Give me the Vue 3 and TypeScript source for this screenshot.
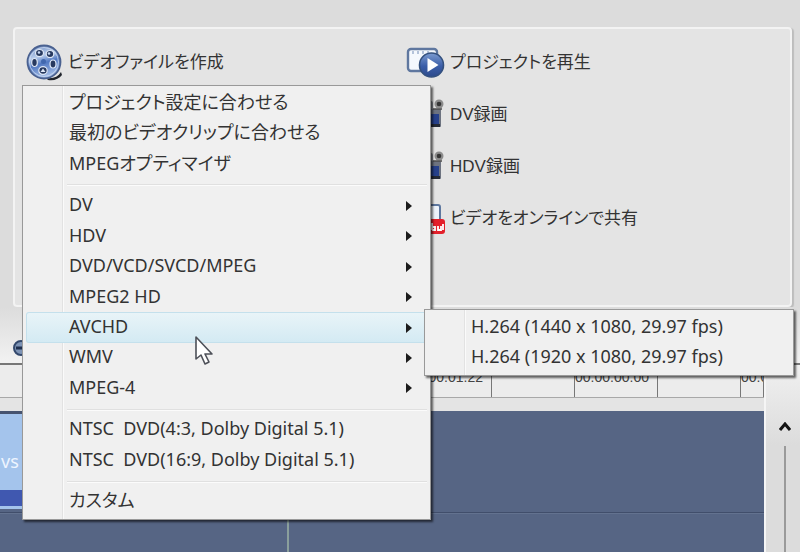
<script setup lang="ts">
interface MenuEntry {
  label: string
  submenu?: boolean
  active?: boolean
}

const groups: MenuEntry[][] = [
  [
    { label: 'プロジェクト設定に合わせる' },
    { label: '最初のビデオクリップに合わせる' },
    { label: 'MPEGオプティマイザ' },
  ],
  [
    { label: 'DV', submenu: true },
    { label: 'HDV', submenu: true },
    { label: 'DVD/VCD/SVCD/MPEG', submenu: true },
    { label: 'MPEG2 HD', submenu: true },
    { label: 'AVCHD', submenu: true, active: true },
    { label: 'WMV', submenu: true },
    { label: 'MPEG-4', submenu: true },
  ],
  [
    { label: 'NTSC  DVD(4:3, Dolby Digital 5.1)' },
    { label: 'NTSC  DVD(16:9, Dolby Digital 5.1)' },
  ],
  [{ label: 'カスタム' }],
]

const formats: string[] = [
  'H.264 (1440 x 1080, 29.97 fps)',
  'H.264 (1920 x 1080, 29.97 fps)',
]

const ticks: string[] = ['', '', '', '', '', '00:00:01:22', '', '00:00:00:00', '', '00:0']
</script>

<template>
  <main class="editor">
    <section class="share">
      <div class="panel">
        <div class="column">
          <button class="action" type="button">
            <svg class="reel" viewBox="0 0 38 38" aria-hidden="true">
              <defs>
                <linearGradient id="reelFill" x1="0" y1="0" x2="0.3" y2="1">
                  <stop offset="0" stop-color="#5d7db8" />
                  <stop offset="0.4" stop-color="#b9cdec" />
                  <stop offset="0.62" stop-color="#5279c2" />
                  <stop offset="1" stop-color="#9fb9e4" />
                </linearGradient>
              </defs>
              <path d="M21 35c7 1 12-1 15-6l1 3c-3 4-8 6-14 5z" fill="#20242c" />
              <circle cx="19" cy="19" r="16.500" fill="url(#reelFill)" stroke="#4a6190" stroke-width="1.800" />
              <circle cx="19" cy="19" r="14.500" fill="none" stroke="#d3e0f4" stroke-width="1" opacity="0.700" />
              <g fill="#27395f" stroke="#dfe8f6" stroke-width="1.200">
                <ellipse cx="14.500" cy="10" rx="4" ry="3.500" />
                <ellipse cx="25" cy="11" rx="3.800" ry="3.500" />
                <ellipse cx="9.500" cy="19.500" rx="2.800" ry="4" />
                <ellipse cx="28" cy="21" rx="3" ry="4" />
                <ellipse cx="18" cy="27.500" rx="4.200" ry="3.800" />
              </g>
              <circle cx="18.500" cy="18.500" r="2.500" fill="#4268ae" />
              <path d="M15.500 29l2.500-3.500 2.500 3.500z" fill="#dfe8f6" />
              <circle cx="14" cy="9.500" r="1.300" fill="#c6d6f0" />
              <circle cx="24" cy="10.500" r="1.300" fill="#c6d6f0" />
            </svg>
            <span>ビデオファイルを作成</span>
          </button>
        </div>
        <div class="column">
          <button class="action" type="button">
            <svg class="icon" viewBox="0 0 40 34" aria-hidden="true">
              <defs>
                <linearGradient id="playFill" x1="0" y1="0" x2="0" y2="1">
                  <stop offset="0" stop-color="#7b9bd0" />
                  <stop offset="0.550" stop-color="#3b5ea8" />
                  <stop offset="1" stop-color="#2c4a8c" />
                </linearGradient>
              </defs>
              <rect x="3" y="4" width="29" height="22" rx="3" fill="#f4f8fd" stroke="#5f779f" stroke-width="2.400" />
              <path d="M8 6v3M13 6v3M18 6v3M23 6v3" stroke="#9fb1ce" stroke-width="1.500" />
              <circle cx="26.500" cy="20" r="12" fill="url(#playFill)" stroke="#34517f" stroke-width="1.600" />
              <path d="M22.500 13v14l11-7z" fill="#fff" />
            </svg>
            <span>プロジェクトを再生</span>
          </button>
          <button v-for="name in ['DV録画', 'HDV録画']" :key="name" class="action" type="button">
            <svg class="icon" viewBox="0 0 40 34" aria-hidden="true">
              <rect x="8" y="4" width="20" height="26" rx="2" fill="#8b8f96" />
              <rect x="24" y="12" width="12" height="18" rx="1" fill="#6d7380" />
              <rect x="24" y="17" width="10" height="10" fill="#26408a" />
              <rect x="24" y="27" width="11" height="3" fill="#252a36" />
              <circle cx="34" cy="7" r="4.500" fill="#8c8c8c" />
              <circle cx="34" cy="7" r="2.300" fill="#353535" />
              <path d="M25 0v11M28 12h9" stroke="#4c4c4c" stroke-width="1.500" />
            </svg>
            <span>{{ name }}</span>
          </button>
          <button class="action" type="button">
            <svg class="icon" viewBox="0 0 40 34" aria-hidden="true">
              <rect x="10" y="4" width="25" height="24" rx="2" fill="#edf3fb" stroke="#5d779f" stroke-width="2" />
              <rect x="12" y="18" width="28" height="15" rx="3" fill="#e3202b" />
              <path d="M27 22v7M27 26h3v3h-3M33 25v4h3v-4M38 23v6" fill="none" stroke="#fff" stroke-width="1.800" />
            </svg>
            <span>ビデオをオンラインで共有</span>
          </button>
        </div>
      </div>
    </section>

    <div class="toolbar">
      <svg class="knob" viewBox="0 0 16 16" aria-hidden="true">
        <circle cx="8" cy="8" r="7" fill="#7d93b5" stroke="#33486c" stroke-width="2" />
        <path d="M3 8h10" stroke="#1f2f4e" stroke-width="3" />
      </svg>
    </div>

    <section class="timeline">
      <div class="tracks">
        <div class="ruler">
          <span v-for="(tick, i) in ticks" :key="i" class="tick">{{ tick }}</span>
        </div>
        <div class="lane">
          <div class="clip"><span>vs</span></div>
        </div>
        <div class="lane lower"><i class="playhead"></i></div>
      </div>
      <div class="scroller">
        <button type="button" aria-label="上へ">
          <svg viewBox="0 0 12 10" aria-hidden="true">
            <path d="M1 8l5-6 5 6" fill="none" stroke="#141414" stroke-width="3" />
          </svg>
        </button>
        <div class="rail"></div>
      </div>
    </section>

    <nav class="menu">
      <template v-for="(group, g) in groups" :key="g">
        <hr v-if="g > 0" />
        <button
          v-for="entry in group"
          :key="entry.label"
          type="button"
          :class="{ active: entry.active }"
        >
          <span>{{ entry.label }}</span>
          <svg v-if="entry.submenu" class="arrow" viewBox="0 0 6 10" aria-hidden="true">
            <path d="M0 0v10l6-5z" fill="#1c1c1c" />
          </svg>
        </button>
      </template>
    </nav>

    <nav class="menu sub">
      <button v-for="format in formats" :key="format" type="button">
        <span>{{ format }}</span>
      </button>
    </nav>

    <svg class="cursor" viewBox="0 0 18 30" aria-hidden="true">
      <path
        d="M1 1v22l5-4 4 9 4-2-4-8h7z"
        fill="#fff"
        stroke="#4d5058"
        stroke-width="1.600"
        stroke-linejoin="round"
      />
    </svg>
  </main>
</template>

<style>
body {
  margin: 0;
}
</style>

<style scoped>
.editor {
  position: relative;
  display: flex;
  flex-direction: column;
  min-height: 100vh;
  overflow: hidden;
  background: #dcdcdc;
  color: #333;
  font-family: "Noto Sans", "Noto Sans CJK JP", sans-serif;
  font-size: 18px;
  font-feature-settings: "palt";
}

button {
  margin: 0;
  padding: 0;
  border: 0;
  background: none;
  color: inherit;
  font: inherit;
  font-feature-settings: inherit;
  text-align: left;
  white-space: pre;
}

.share {
  padding: 27px 8px 0 13px;
}

.panel {
  display: grid;
  grid-template-columns: 380px 1fr;
  box-sizing: border-box;
  min-height: 280px;
  padding: 7px 10px;
  border: 2px solid #f3f3f3;
  border-radius: 4px;
  background: #e4e4e4;
  box-shadow: 2px 1px 1px #bdbdbd;
}

.column {
  display: flex;
  flex-direction: column;
}

.action {
  display: flex;
  align-items: center;
  gap: 5px;
  height: 52px;
  font-family: "Liberation Sans", "Noto Sans CJK JP", sans-serif;
  font-size: 17px;
}

.action span {
  padding-bottom: 4px;
}

.reel {
  width: 38px;
  height: 38px;
}

.icon {
  width: 40px;
  height: 34px;
}

.toolbar {
  display: flex;
  align-items: center;
  height: 56px;
  padding: 0 13px;
  border-bottom: 2px solid #777;
  background: linear-gradient(#dcdcdc, #f2f2f2);
}

.knob {
  width: 16px;
  height: 16px;
  margin-top: 26px;
}

.timeline {
  display: grid;
  flex: 1;
  grid-template-columns: 1fr 34px;
}

.tracks {
  display: flex;
  flex-direction: column;
  min-width: 0;
  border-right: 2px solid #f5f5f5;
  background: #566584;
}

.ruler {
  display: flex;
  height: 32px;
  border-bottom: 1px solid #a8a8a8;
  box-shadow: 0 13px #e4e4e4;
  background: #ececec;
}

.tick {
  flex: 0 0 83px;
  box-sizing: border-box;
  border-right: 1px solid #777;
  color: #444;
  font-family: "Liberation Sans", sans-serif;
  font-size: 14px;
  line-height: 24px;
}

.tick:first-child {
  flex-basis: 77px;
}

.tick:last-child {
  flex: 1 1 0;
  min-width: 0;
  overflow: hidden;
}

.lane {
  display: flex;
  box-sizing: border-box;
  height: 115px;
  padding-top: 13px;
  border-bottom: 1px solid #414e6b;
}

.lower {
  flex: 1;
  height: auto;
  padding: 0 0 0 287px;
  border-top: 1px solid #63728f;
  border-bottom: 0;
}

.playhead {
  width: 2px;
  background: #8a9f9c;
}

.clip {
  display: flex;
  align-items: center;
  box-sizing: border-box;
  width: 200px;
  height: 98px;
  padding: 2px 1px 0;
  border-top: 3px solid #46536f;
  border-bottom: 3px solid #a4c4ec;
  background: linear-gradient(#a4c4ec 76px, #4058b0 76px);
  color: #eef5ff;
}

.scroller {
  display: flex;
  flex-direction: column;
  align-items: center;
  gap: 14px;
  padding: 57px 0 0 4px;
  background: linear-gradient(#f0f0f0, #dcdcdc 80px);
}

.scroller button {
  display: flex;
}

.scroller svg {
  width: 12px;
  height: 10px;
}

.rail {
  flex: 1;
  width: 2px;
  background: #9a9a9a;
}

.menu {
  position: absolute;
  top: 85px;
  left: 22px;
  display: flex;
  flex-direction: column;
  box-sizing: border-box;
  width: 409px;
  min-height: 435px;
  padding: 2px 3px;
  border: 1px solid #999;
  background: linear-gradient(90deg, #f0f0f0 39px, #e2e2e2 39px, #e2e2e2 40px, #fafafa 40px, #fafafa 41px, #f0f0f0 41px);
  box-shadow: 2px 2px 2px rgba(0, 0, 0, 0.6);
}

.menu button {
  display: flex;
  flex: 1 0 30px;
  align-items: center;
  justify-content: space-between;
  padding: 0 15px 0 43px;
  border-radius: 3px;
}

.menu span {
  line-height: 24px;
  padding-bottom: 3px;
}

.menu button.active {
  background: linear-gradient(#e9f4f8, #d3eaf3);
  box-shadow: inset 0 0 0 1px #c4e0ec;
}

.menu hr {
  box-sizing: border-box;
  width: calc(100% - 41px);
  height: 2px;
  margin: 5px 0 4px 41px;
  border: 0;
  border-top: 1px solid #e0e0e0;
  border-bottom: 1px solid #fbfbfb;
}

.arrow {
  width: 6px;
  height: 10px;
}

.menu.sub {
  top: 309px;
  left: 424px;
  width: 370px;
  min-height: 67px;
}

.cursor {
  position: absolute;
  top: 336px;
  left: 195px;
  width: 18px;
  height: 30px;
}
</style>
